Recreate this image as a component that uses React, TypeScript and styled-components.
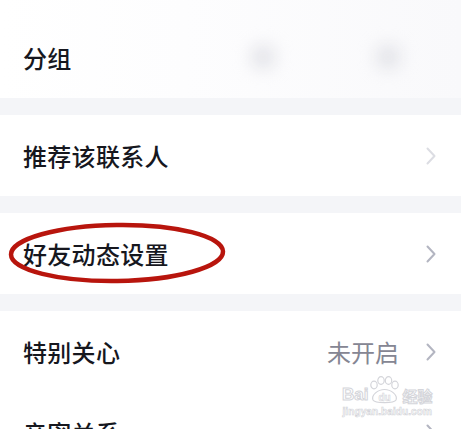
import React from "react";
import styled, { createGlobalStyle } from "styled-components";

const GlobalStyle = createGlobalStyle`
  html, body {
    margin: 0;
    padding: 0;
    background: #f4f5f8;
    overflow: hidden;
  }
  body {
    font-family: "Noto Sans CJK SC", "Noto Sans", sans-serif;
  }
`;

const Page = styled.div`
  position: relative;
  width: 461px;
  height: 429px;
  overflow: hidden;
  background: #f4f5f8;
  display: flex;
  flex-direction: column;
  gap: 17px;
`;

const Group = styled.div<{ $hazy?: boolean }>`
  background: ${(p) =>
    p.$hazy ? "linear-gradient(90deg, #ffffff 0%, #fdfdfe 40%, #f9f9fb 100%)" : "#ffffff"};
  display: flex;
  flex-direction: column;
`;

const Row = styled.div<{ $top?: number }>`
  position: relative;
  height: ${(p) => 81 + (p.$top ?? 0)}px;
  flex-shrink: 0;
  display: flex;
  align-items: center;
  padding: ${(p) => p.$top ?? 0}px 24px 0 23px;
  box-sizing: border-box;
`;

const Label = styled.span`
  flex: 1;
  font-size: 24px;
  font-weight: 500;
  line-height: 1;
  color: #16171e;
  letter-spacing: 0.3px;
`;

const Value = styled.span`
  font-size: 24px;
  line-height: 1;
  color: #858693;
  margin-right: 26px;
`;

const Blur = styled.div<{ $x: number }>`
  position: absolute;
  left: ${(p) => p.$x}px;
  top: 46px;
  width: 22px;
  height: 22px;
  border-radius: 50%;
  background: #dcdde3;
  filter: blur(9px);
`;

const Circle = styled.svg`
  position: absolute;
  left: 6px;
  top: 7px;
  pointer-events: none;
`;

const Watermark = styled.div`
  position: absolute;
  left: 342px;
  top: 376px;
  display: flex;
  flex-direction: column;
  align-items: center;
  color: #ffffff;
  pointer-events: none;
`;

const MarkLine = styled.div`
  display: flex;
  align-items: flex-end;
  font-family: "Liberation Sans", sans-serif;
  font-weight: 700;
  font-size: 17px;
  line-height: 1;
  -webkit-text-stroke: 1px #d4d5da;
`;

const MarkCjk = styled.span`
  font-family: "Noto Sans CJK SC", sans-serif;
  font-size: 15px;
  margin-left: 1px;
`;

const MarkUrl = styled.div`
  margin-top: 3px;
  font-family: "Liberation Sans", sans-serif;
  font-size: 10px;
  font-weight: 700;
  letter-spacing: 0.1px;
  color: #ffffff;
  -webkit-text-stroke: 0.6px #d2d3d8;
`;

const Chevron: React.FC<{ faint?: boolean }> = ({ faint }) => (
  <svg width="12" height="18" viewBox="0 0 12 18">
    <path
      d="M2.5 1.5 L9.5 9 L2.5 16.5"
      fill="none"
      stroke={faint ? "#dcdde3" : "#b3b5c1"}
      strokeWidth="2"
      strokeLinecap="round"
      strokeLinejoin="round"
    />
  </svg>
);

const Paw: React.FC = () => (
  <svg width="33" height="28" viewBox="0 0 33 28" style={{ marginBottom: -1 }}>
    <g fill="#fff" stroke="#d4d5da" strokeWidth="1.2">
      <ellipse cx="6" cy="9" rx="3.2" ry="3.8" />
      <ellipse cx="13" cy="4.5" rx="3.2" ry="3.8" />
      <ellipse cx="20.5" cy="4.5" rx="3.2" ry="3.8" />
      <ellipse cx="27" cy="9" rx="3.2" ry="3.8" />
      <path d="M5 24 C3 19 10 13.5 16.5 13.5 C23 13.5 30 19 28 24 C26 27.5 7 27.5 5 24 Z" />
    </g>
    <text
      x="16.5"
      y="24.5"
      textAnchor="middle"
      fontFamily="Liberation Sans, sans-serif"
      fontWeight="700"
      fontSize="10"
      fill="#fff"
      stroke="#d4d5da"
      strokeWidth="0.6"
    >
      du
    </text>
  </svg>
);

const App: React.FC = () => {
  return (
    <>
      <GlobalStyle />
      <Page>
        <Group $hazy>
          <Row $top={17}>
            <Label>分组</Label>
            <Blur $x={252} />
            <Blur $x={377} />
          </Row>
        </Group>
        <Group>
          <Row>
            <Label>推荐该联系人</Label>
            <Chevron faint />
          </Row>
        </Group>
        <Group>
          <Row>
            <Label>好友动态设置</Label>
            <Chevron />
            <Circle width="224" height="66" viewBox="0 0 224 66">
              <ellipse
                cx="111"
                cy="33"
                rx="106"
                ry="28"
                fill="none"
                stroke="#b8150d"
                strokeWidth="4.5"
                transform="rotate(-0.8 111 33)"
              />
            </Circle>
          </Row>
        </Group>
        <Group>
          <Row>
            <Label>特别关心</Label>
            <Value>未开启</Value>
            <Chevron />
          </Row>
          <Row>
            <Label>亲密关系</Label>
            <Chevron />
          </Row>
        </Group>
        <Watermark>
          <MarkLine>
            <span>Bai</span>
            <Paw />
            <MarkCjk>经验</MarkCjk>
          </MarkLine>
          <MarkUrl>jingyan.baidu.com</MarkUrl>
        </Watermark>
      </Page>
    </>
  );
};

export default App;
